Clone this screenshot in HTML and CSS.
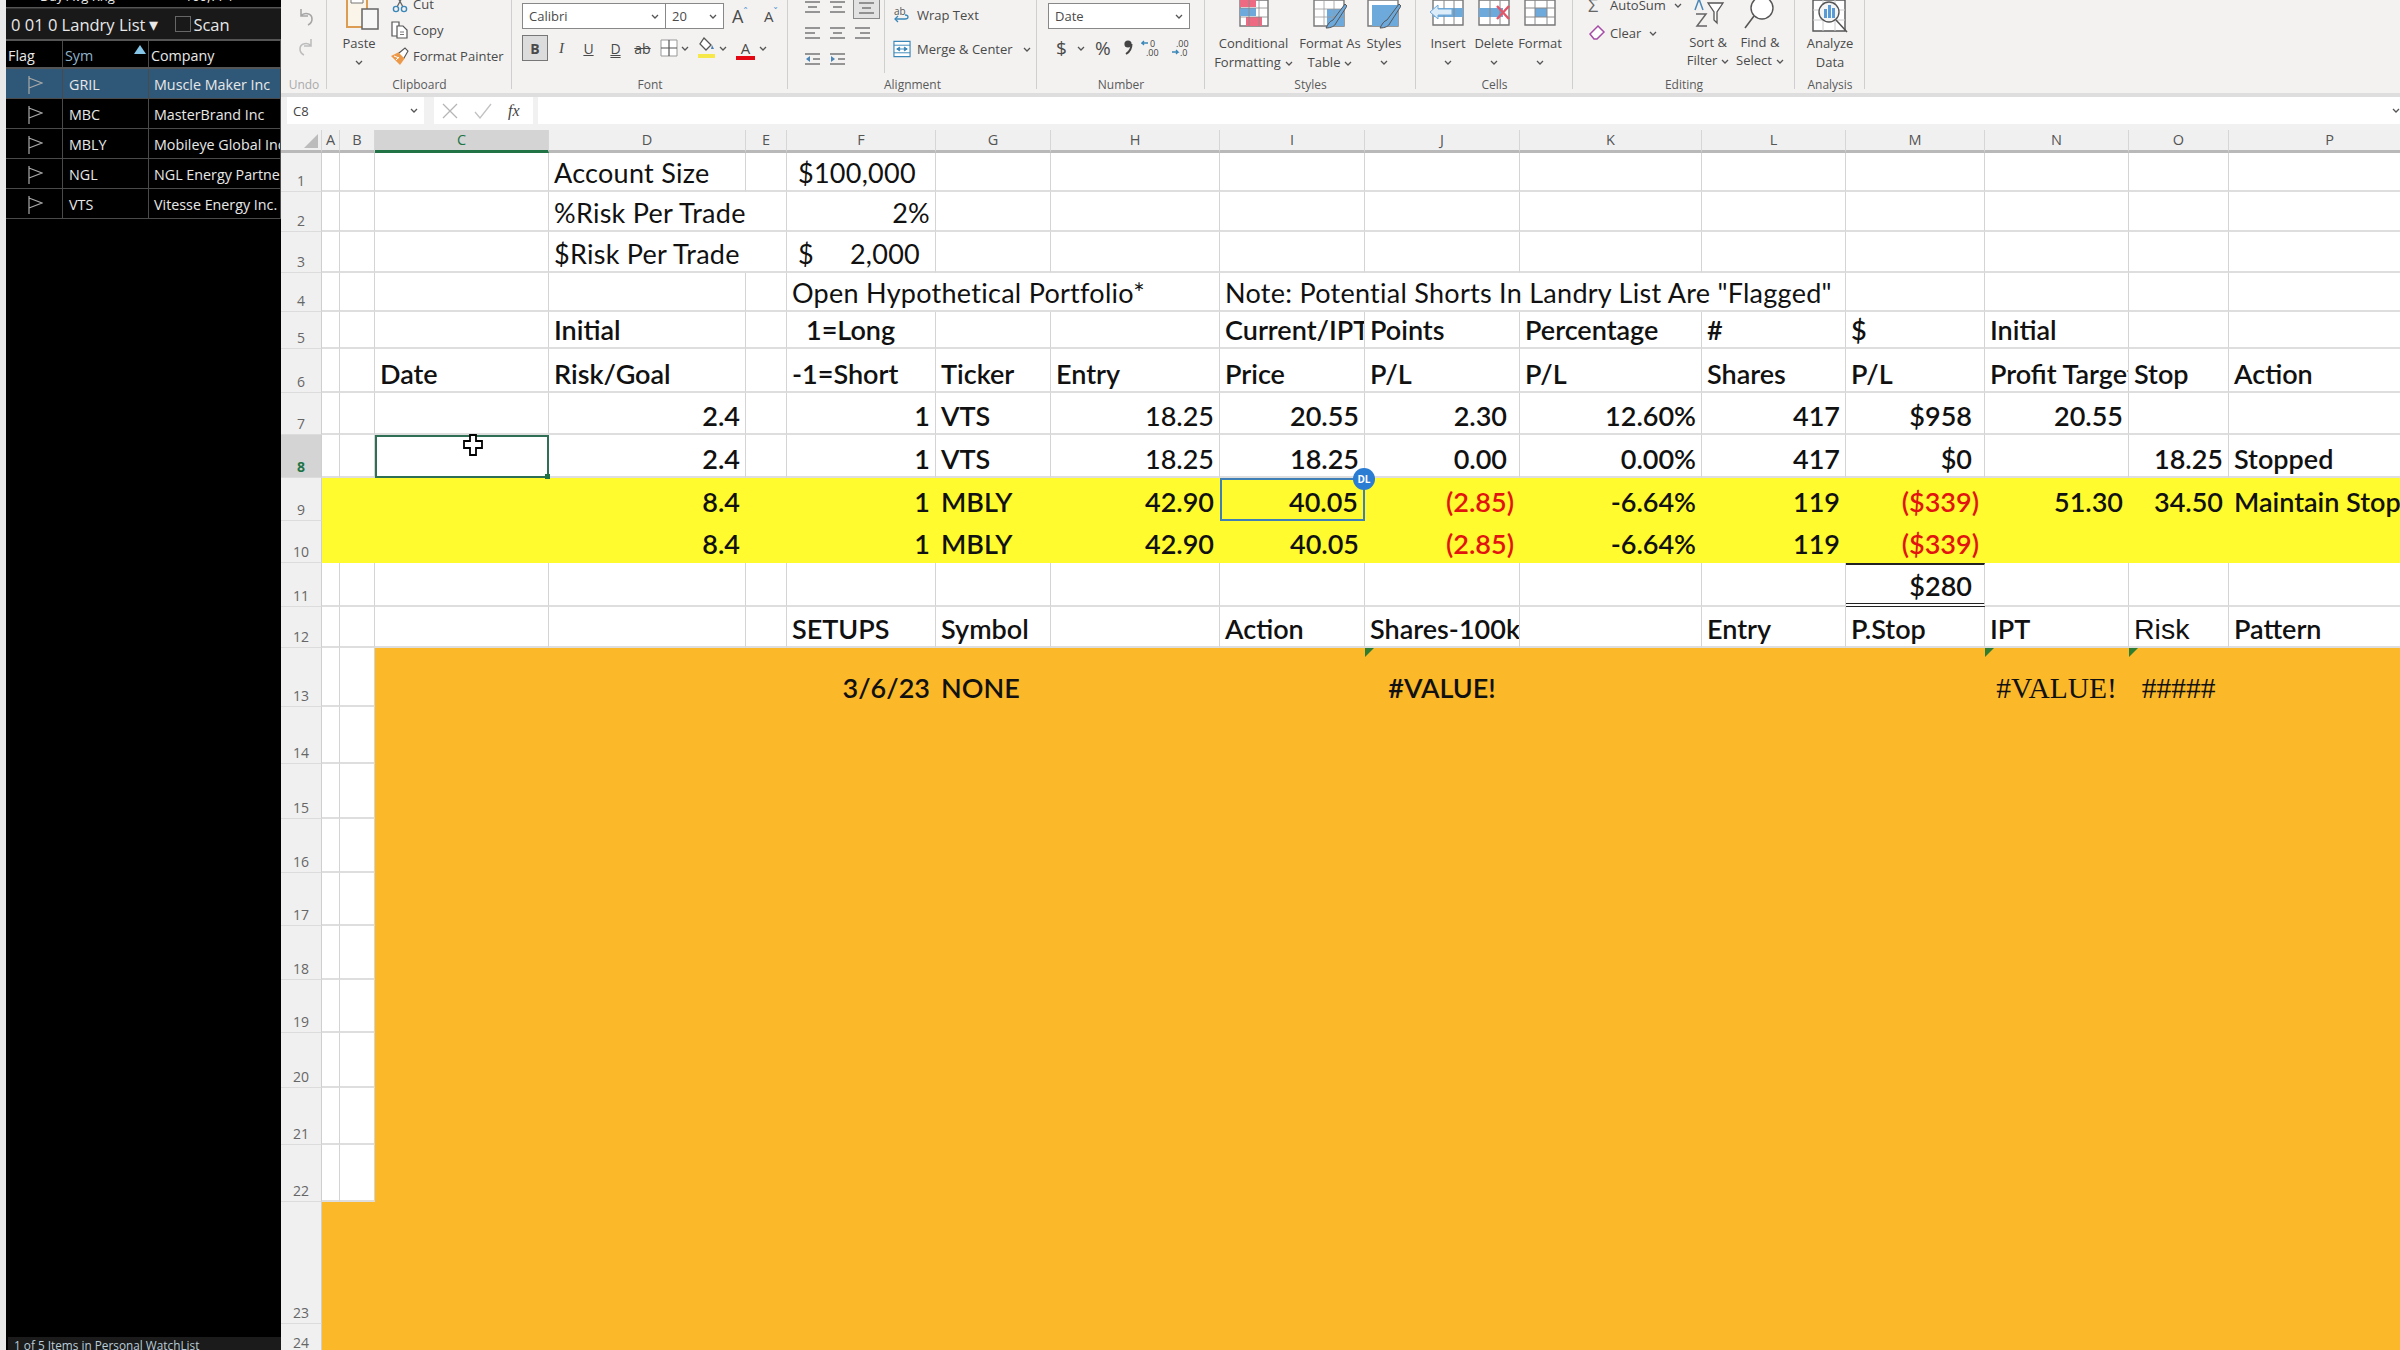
FILE: index.html
```html
<!DOCTYPE html>
<html lang="en">
<head>
	<meta charset="UTF-8">
	<title>Landry List - Excel</title>
	<link rel="stylesheet" href="styles.css">
</head>
<body>
	<svg class="defs" width="0" height="0">
		<symbol id="chev" viewBox="0 0 8 5"><path d="M1 1l3 3 3-3" fill="none" stroke="#555" stroke-width="1.3"/></symbol>
		<symbol id="al-l" viewBox="0 0 15 15"><path d="M0 2h15M0 7h10M0 12h15" stroke="#777" stroke-width="1.6"/></symbol>
		<symbol id="al-c" viewBox="0 0 15 15"><path d="M0 2h15M3 7h9M0 12h15" stroke="#777" stroke-width="1.6"/></symbol>
		<symbol id="al-r" viewBox="0 0 15 15"><path d="M0 2h15M5 7h10M0 12h15" stroke="#777" stroke-width="1.6"/></symbol>
		<symbol id="flag" viewBox="0 0 16 18"><path d="M2 0v18M2 2l13 5-13 5" fill="none" stroke="#a8a8a8" stroke-width="1.2"/></symbol>
	</svg>

	<aside class="watchlist">
		<div class="wl-top"><span>Day Avg Rng</span><span>100,774</span></div>
		<div class="wl-title">
			<span>0 01 0 Landry List</span><span class="wl-caret">&#9662;</span>
			<span class="wl-check"></span><span>Scan</span>
		</div>
		<div class="wl-row wl-head">
			<div>Flag</div>
			<div class="wl-sym">Sym<i class="wl-sort"></i></div>
			<div>Company</div>
		</div>
		<div class="wl-row wl-active">
			<div class="wl-flag"><svg width="16" height="18"><use href="#flag"/></svg></div><div class="wl-ticker">GRIL</div><div>Muscle Maker Inc</div>
		</div>
		<div class="wl-row">
			<div class="wl-flag"><svg width="16" height="18"><use href="#flag"/></svg></div><div class="wl-ticker">MBC</div><div>MasterBrand Inc</div>
		</div>
		<div class="wl-row">
			<div class="wl-flag"><svg width="16" height="18"><use href="#flag"/></svg></div><div class="wl-ticker">MBLY</div><div>Mobileye Global Inc</div>
		</div>
		<div class="wl-row">
			<div class="wl-flag"><svg width="16" height="18"><use href="#flag"/></svg></div><div class="wl-ticker">NGL</div><div>NGL Energy Partners</div>
		</div>
		<div class="wl-row">
			<div class="wl-flag"><svg width="16" height="18"><use href="#flag"/></svg></div><div class="wl-ticker">VTS</div><div>Vitesse Energy Inc.</div>
		</div>
		<div class="wl-status">1 of 5 Items in Personal WatchList</div>
	</aside>

	<main class="app">
		<div class="ribbon">
			<!-- undo -->
			<section class="group group-undo">
				<div class="group-body undo-body">
					<svg width="20" height="20" viewBox="0 0 20 20"><path d="M5 2v7h7M5 9c3-4 11-3 11 3 0 3-2 5-4 6" fill="none" stroke="#a6a6a6" stroke-width="1.6"/></svg>
					<svg width="20" height="20" viewBox="0 0 20 20"><path d="M15 2v7H8M15 9c-3-4-11-3-11 3 0 3 2 5 4 6" fill="none" stroke="#bdbdbd" stroke-width="1.6"/></svg>
				</div>
				<div class="group-label muted">Undo</div>
			</section>

			<!-- clipboard -->
			<section class="group group-clip">
				<div class="group-body">
					<div class="big paste">
						<svg class="big-icon" width="44" height="34" viewBox="0 0 44 34"><path d="M10 -2h20v29H10z" fill="#fbf4e8" stroke="#dc9c52" stroke-width="2"/><path d="M14 -2h12v5H14z" fill="#fff" stroke="#777"/><path d="M25 9h16v20H25z" fill="#f7f7f7" stroke="#666" stroke-width="1.5"/></svg>
						<span>Paste</span>
						<svg class="chev" width="8" height="5"><use href="#chev"/></svg>
					</div>
					<div class="stack">
						<div class="stack-row">
							<svg width="18" height="20" viewBox="0 0 18 20"><path d="M5 0l7 13M13 0L6 13" stroke="#666" stroke-width="1.3"/><circle cx="5" cy="15" r="2.6" fill="none" stroke="#3b87b8" stroke-width="1.4"/><circle cx="13" cy="15" r="2.6" fill="none" stroke="#3b87b8" stroke-width="1.4"/></svg>
							<span>Cut</span>
						</div>
						<div class="stack-row">
							<svg width="18" height="18" viewBox="0 0 18 18"><path d="M1 1h7v14H1z" fill="#fff" stroke="#555" stroke-width="1.2"/><path d="M6 5h6l4 4v8H6z" fill="#fff" stroke="#555" stroke-width="1.2"/><path d="M9 11h4M9 13.500h4" stroke="#777"/></svg>
							<span>Copy</span>
						</div>
						<div class="stack-row">
							<svg width="18" height="18" viewBox="0 0 18 18"><path d="M0 9l8-4 6 6-5 7z" fill="#ec9a4a"/><path d="M3 9l5 2M5 13l3-3" stroke="#fff"/><path d="M8 6l6-5 3 3-4 7" fill="#fff" stroke="#555" stroke-width="1.1"/></svg>
							<span>Format Painter</span>
						</div>
					</div>
				</div>
				<div class="group-label">Clipboard</div>
			</section>

			<!-- font -->
			<section class="group group-font">
				<div class="group-body font-body">
					<div class="tool-row">
						<div class="combo combo-font"><span>Calibri</span><svg width="8" height="5"><use href="#chev"/></svg></div>
						<div class="combo combo-size"><span>20</span><svg width="8" height="5"><use href="#chev"/></svg></div>
						<div class="grow-a">A<sup>&#710;</sup></div>
						<div class="grow-a shrink-a">A<sup>&#711;</sup></div>
					</div>
					<div class="tool-row row-two">
						<div class="tool tool-bold">B</div>
						<div class="tool tool-i">I</div>
						<div class="tool tool-u">U</div>
						<div class="tool tool-d">D</div>
						<div class="tool tool-s">ab</div>
						<div class="tool tool-w">
							<svg width="18" height="18" viewBox="0 0 18 18"><path d="M1 1h16v16H1z" fill="#fff" stroke="#999"/><path d="M9 1v16M1 9h16" stroke="#555" stroke-width="1.2"/></svg>
						</div>
						<div class="tool-c"><svg width="8" height="5"><use href="#chev"/></svg></div>
						<div class="tool tool-w">
							<svg width="20" height="22" viewBox="0 0 20 22"><path d="M7 1l7 7-5 5-6-6z" fill="#fff" stroke="#555" stroke-width="1.3"/><path d="M15 8l2 4h-3z" fill="#4a7fb5"/><path d="M1 17h17v4H1z" fill="#f6e84a"/></svg>
						</div>
						<div class="tool-c"><svg width="8" height="5"><use href="#chev"/></svg></div>
						<div class="tool tool-color">A</div>
						<div class="tool-c"><svg width="8" height="5"><use href="#chev"/></svg></div>
					</div>
				</div>
				<div class="group-label">Font</div>
			</section>

			<!-- alignment -->
			<section class="group group-align">
				<div class="group-body">
					<div class="align-grid">
						<svg width="15" height="15"><use href="#al-c"/></svg>
						<svg width="15" height="15"><use href="#al-c"/></svg>
						<div class="align-on"><svg width="15" height="15"><use href="#al-c"/></svg></div>
						<svg width="15" height="15"><use href="#al-l"/></svg>
						<svg width="15" height="15"><use href="#al-c"/></svg>
						<svg width="15" height="15"><use href="#al-r"/></svg>
						<svg width="15" height="15" viewBox="0 0 15 15"><path d="M0 2h15M8 7h7M0 12h15" stroke="#777" stroke-width="1.6"/><path d="M1 7l4-3v6z" fill="#4a86b8"/></svg>
						<svg width="15" height="15" viewBox="0 0 15 15"><path d="M0 2h15M8 7h7M0 12h15" stroke="#777" stroke-width="1.6"/><path d="M5 7L1 4v6z" fill="#4a86b8"/></svg>
					</div>
					<div class="stack stack-wrap">
						<div class="stack-row">
							<svg width="18" height="18" viewBox="0 0 18 18"><text x="1" y="9" class="wrap-ab">ab</text><path d="M2 13h10c4 0 4-4 0-4" fill="none" stroke="#3b87b8" stroke-width="1.3"/><path d="M5 10l-3 3 3 3" fill="none" stroke="#3b87b8" stroke-width="1.3"/></svg>
							<span>Wrap Text</span>
						</div>
						<div class="stack-row">
							<svg width="19" height="18" viewBox="0 0 19 18"><path d="M1 1h17v16H1z" fill="#fff" stroke="#3b87b8" stroke-width="1.2"/><path d="M1 5h17M1 13h17" stroke="#3b87b8"/><path d="M4 9h11M4 9l3-2v4zM15 9l-3-2v4z" stroke="#3b87b8" fill="#3b87b8"/></svg>
							<span>Merge &amp; Center</span><svg class="chev-inline" width="8" height="5"><use href="#chev"/></svg>
						</div>
					</div>
				</div>
				<div class="group-label">Alignment</div>
			</section>

			<!-- number -->
			<section class="group group-number">
				<div class="group-body font-body">
					<div class="combo combo-num"><span>Date</span><svg width="8" height="5"><use href="#chev"/></svg></div>
					<div class="tool-row row-two num-tools">
						<span class="num-sign">$</span>
						<svg width="8" height="5"><use href="#chev"/></svg>
						<span class="num-sign">%</span>
						<svg class="num-comma" width="12" height="18" viewBox="0 0 12 18"><circle cx="6" cy="5" r="3.6" fill="#444"/><path d="M9.500 5c0 5-2 8-5.500 10" fill="none" stroke="#444" stroke-width="2"/></svg>
						<svg class="num-inc" width="18" height="20" viewBox="0 0 18 20"><text x="9" y="9" class="dec">0</text><text x="5" y="18" class="dec">.00</text><path d="M7 5H1l2-2M1 5l2 2" fill="none" stroke="#3b87b8" stroke-width="1.3"/></svg>
						<svg class="num-dec" width="18" height="20" viewBox="0 0 18 20"><text x="5" y="9" class="dec">.00</text><text x="9" y="18" class="dec">.0</text><path d="M1 14h6l-2-2M7 14l-2 2" fill="none" stroke="#3b87b8" stroke-width="1.3"/></svg>
					</div>
				</div>
				<div class="group-label">Number</div>
			</section>

			<!-- styles -->
			<section class="group group-styles">
				<div class="group-body">
					<div class="big big-cond">
						<svg class="big-icon" width="32" height="34" viewBox="0 0 32 34"><path d="M2 0h28v26H2z" fill="#fff" stroke="#777" stroke-width="1.4"/><path d="M2 -2h16v9H2zM8 17h16v9H8z" fill="#ee6a82"/><path d="M2 8h16v8H2z" fill="#6ea9dc"/><path d="M11 0v26M21 0v26M2 8h28M2 17h28" stroke="#888" stroke-width=".8" fill="none"/></svg>
						<span>Conditional</span>
						<span>Formatting<svg class="chev-inline" width="8" height="5"><use href="#chev"/></svg></span>
					</div>
					<div class="big big-table">
						<svg class="big-icon" width="34" height="34" viewBox="0 0 34 34"><path d="M1 0h30v26H1z" fill="#fff" stroke="#777" stroke-width="1.4"/><path d="M14 9h17v17H14z" fill="#6ea9dc"/><path d="M11 0v26M21 0v26M1 9h30M1 17h30" stroke="#999" stroke-width=".8"/><path d="M32 4L20 20c-3 1-5 4-7 8 5 0 9-2 10-5L34 6z" fill="#6ea9dc" stroke="#555"/></svg>
						<span>Format As</span>
						<span>Table<svg class="chev-inline" width="8" height="5"><use href="#chev"/></svg></span>
					</div>
					<div class="big big-style">
						<svg class="big-icon" width="34" height="34" viewBox="0 0 34 34"><path d="M1 0h30v26H1z" fill="#fff" stroke="#777" stroke-width="1.4"/><path d="M5 5h26v21H5z" fill="#6ea9dc"/><path d="M32 4L20 20c-3 1-5 4-7 8 5 0 9-2 10-5L34 6z" fill="#6ea9dc" stroke="#555"/></svg>
						<span>Styles</span>
						<svg class="chev" width="8" height="5"><use href="#chev"/></svg>
					</div>
				</div>
				<div class="group-label">Styles</div>
			</section>

			<!-- cells -->
			<section class="group group-cells">
				<div class="group-body">
					<div class="big big-cell">
						<svg class="big-icon" width="36" height="34" viewBox="0 0 36 34"><path d="M3 0h30v25H3z" fill="#fff" stroke="#777" stroke-width="1.4"/><path d="M3 8h30v9H3z" fill="#6ea9dc"/><path d="M14 0v25M24 0v25" stroke="#888"/><path d="M0 12l8-7v4h14v6H8v4z" fill="#dcecf8" stroke="#6ea9dc"/></svg>
						<span>Insert</span>
						<svg class="chev" width="8" height="5"><use href="#chev"/></svg>
					</div>
					<div class="big big-cell">
						<svg class="big-icon" width="36" height="34" viewBox="0 0 36 34"><path d="M3 0h30v25H3z" fill="#fff" stroke="#777" stroke-width="1.4"/><path d="M3 8h24v9H3z" fill="#6ea9dc"/><path d="M14 0v25M24 0v25" stroke="#888"/><path d="M21 6l12 13M33 6L21 19" stroke="#e2566a" stroke-width="2.4"/></svg>
						<span>Delete</span>
						<svg class="chev" width="8" height="5"><use href="#chev"/></svg>
					</div>
					<div class="big big-cell">
						<svg class="big-icon" width="36" height="34" viewBox="0 0 36 34"><path d="M3 0h30v25H3z" fill="#fff" stroke="#777" stroke-width="1.4"/><path d="M13 8h12v9H13z" fill="#6ea9dc"/><path d="M13 0v25M25 0v25M3 8h30M3 17h30" stroke="#888"/></svg>
						<span>Format</span>
						<svg class="chev" width="8" height="5"><use href="#chev"/></svg>
					</div>
				</div>
				<div class="group-label">Cells</div>
			</section>

			<!-- editing -->
			<section class="group group-edit">
				<div class="group-body">
					<div class="stack stack-edit">
						<div class="stack-row">
							<span class="sigma">&Sigma;</span>
							<span>AutoSum</span><svg class="chev-inline" width="8" height="5"><use href="#chev"/></svg>
						</div>
						<div class="stack-row">
							<svg width="16" height="18" viewBox="0 0 16 18"><path d="M1 10l8-8 6 6-7 7H5z" fill="#fff" stroke="#a64ca6" stroke-width="1.5"/></svg>
							<span>Clear</span><svg class="chev-inline" width="8" height="5"><use href="#chev"/></svg>
						</div>
					</div>
					<div class="big big-edit">
						<svg class="big-icon" width="36" height="33" viewBox="0 0 36 33"><path d="M6 14h10l-9 12h10" fill="none" stroke="#666" stroke-width="1.5"/><path d="M5 10l4-11 4 11" fill="none" stroke="#4a86b8" stroke-width="1.5"/><path d="M18 3h15l-6 9v11l-3-3v-8z" fill="#fff" stroke="#555" stroke-width="1.3"/></svg>
						<span>Sort &amp;</span>
						<span>Filter<svg class="chev-inline" width="8" height="5"><use href="#chev"/></svg></span>
					</div>
					<div class="big big-edit">
						<svg class="big-icon" width="36" height="33" viewBox="0 0 36 33"><circle cx="20" cy="8" r="11" fill="#fff" stroke="#555" stroke-width="1.4"/><path d="M12 16L3 28" stroke="#555" stroke-width="1.6"/></svg>
						<span>Find &amp;</span>
						<span>Select<svg class="chev-inline" width="8" height="5"><use href="#chev"/></svg></span>
					</div>
				</div>
				<div class="group-label">Editing</div>
			</section>

			<!-- analysis -->
			<section class="group group-analysis">
				<div class="group-body">
					<div class="big big-analysis">
						<svg class="big-icon" width="38" height="34" viewBox="0 0 38 34"><path d="M2 0h32v31H2z" fill="#fff" stroke="#555" stroke-width="1.4"/><path d="M2 10h32M2 20h32M12 0v31M24 0v31" stroke="#ccc"/><circle cx="18" cy="12" r="10" fill="#f5f5f5" stroke="#555" stroke-width="1.4"/><path d="M13 9h3v9h-3zM17 5h3v13h-3zM21 8h3v10h-3z" fill="#5b9bd5"/><path d="M25 20l11 12" stroke="#555" stroke-width="1.6"/></svg>
						<span>Analyze</span>
						<span>Data</span>
					</div>
				</div>
				<div class="group-label">Analysis</div>
			</section>
		</div>

		<div class="formula-bar">
			<div class="name-box"><span>C8</span><svg width="8" height="5"><use href="#chev"/></svg></div>
			<div class="fx-box">
				<svg width="16" height="16" viewBox="0 0 16 16"><path d="M1 1l14 14M15 1L1 15" stroke="#b5b5b5" stroke-width="1.3"/></svg>
				<svg width="18" height="16" viewBox="0 0 18 16"><path d="M1 9l5 6L17 1" fill="none" stroke="#c2c2c2" stroke-width="1.3"/></svg>
				<span class="fx">fx</span>
			</div>
			<div class="formula-input"><svg width="8" height="5"><use href="#chev"/></svg></div>
		</div>

		<table class="sheet">
			<colgroup>
				<col class="c-head"><col class="c-a"><col class="c-b"><col class="c-c"><col class="c-d"><col class="c-e"><col class="c-f"><col class="c-g"><col class="c-h"><col class="c-i"><col class="c-j"><col class="c-k"><col class="c-l"><col class="c-m"><col class="c-n"><col class="c-o"><col class="c-p">
			</colgroup>
			<thead>
				<tr class="col-heads">
					<th class="corner"><i></i></th><th>A</th><th>B</th><th class="on">C</th><th>D</th><th>E</th><th>F</th><th>G</th><th>H</th><th>I</th><th>J</th><th>K</th><th>L</th><th>M</th><th>N</th><th>O</th><th>P</th>
				</tr>
			</thead>
			<tbody>
				<tr class="r1">
					<th>1</th><td></td><td></td><td></td><td>Account Size</td><td></td><td class="in1">$100,000</td><td></td><td></td><td></td><td></td><td></td><td></td><td></td><td></td><td></td><td></td>
				</tr>
				<tr class="r2">
					<th>2</th><td></td><td></td><td></td><td colspan="2">%Risk Per Trade</td><td class="num">2%</td><td></td><td></td><td></td><td></td><td></td><td></td><td></td><td></td><td></td><td></td>
				</tr>
				<tr class="r3">
					<th>3</th><td></td><td></td><td></td><td colspan="2">$Risk Per Trade</td><td><div class="acct"><span>$</span><span>2,000</span></div></td><td></td><td></td><td></td><td></td><td></td><td></td><td></td><td></td><td></td><td></td>
				</tr>
				<tr class="r4">
					<th>4</th><td></td><td></td><td></td><td></td><td></td><td colspan="3">Open Hypothetical Portfolio*</td><td colspan="4">Note: Potential Shorts In Landry List Are "Flagged"</td><td></td><td></td><td></td><td></td>
				</tr>
				<tr class="r5 bold">
					<th>5</th><td></td><td></td><td></td><td>Initial</td><td></td><td class="in2">1=Long</td><td></td><td></td><td>Current/IPT</td><td>Points</td><td>Percentage</td><td>#</td><td>$</td><td>Initial</td><td></td><td></td>
				</tr>
				<tr class="r6 bold">
					<th>6</th><td></td><td></td><td>Date</td><td>Risk/Goal</td><td></td><td>-1=Short</td><td>Ticker</td><td>Entry</td><td>Price</td><td>P/L</td><td>P/L</td><td>Shares</td><td>P/L</td><td>Profit Target</td><td>Stop</td><td>Action</td>
				</tr>
				<tr class="r7 data">
					<th>7</th><td></td><td></td><td></td><td class="num">2.4</td><td></td><td class="num">1</td><td>VTS</td><td class="num thin">18.25</td><td class="num">20.55</td><td class="num pad">2.30</td><td class="num">12.60%</td><td class="num">417</td><td class="num pad">$958</td><td class="num">20.55</td><td></td><td></td>
				</tr>
				<tr class="r8 data">
					<th class="on">8</th><td></td><td></td><td class="picked"><svg class="cursor" width="20" height="22" viewBox="0 0 20 22"><path d="M7 1h6v6h6v7h-6v7H7v-7H1V7h6z" fill="#fff" stroke="#000" stroke-width="1.8"/></svg></td><td class="num">2.4</td><td></td><td class="num">1</td><td>VTS</td><td class="num thin">18.25</td><td class="num">18.25</td><td class="num pad">0.00</td><td class="num">0.00%</td><td class="num">417</td><td class="num pad">$0</td><td></td><td class="num">18.25</td><td>Stopped</td>
				</tr>
				<tr class="r9 data hi">
					<th>9</th><td></td><td></td><td></td><td class="num">8.4</td><td></td><td class="num">1</td><td>MBLY</td><td class="num">42.90</td><td class="num active-cell">40.05<span class="badge">DL</span></td><td class="num red">(2.85)</td><td class="num">-6.64%</td><td class="num">119</td><td class="num red">($339)</td><td class="num">51.30</td><td class="num">34.50</td><td>Maintain Stop</td>
				</tr>
				<tr class="r10 data hi">
					<th>10</th><td></td><td></td><td></td><td class="num">8.4</td><td></td><td class="num">1</td><td>MBLY</td><td class="num">42.90</td><td class="num">40.05</td><td class="num red">(2.85)</td><td class="num">-6.64%</td><td class="num">119</td><td class="num red">($339)</td><td></td><td></td><td></td>
				</tr>
				<tr class="r11 data">
					<th>11</th><td></td><td></td><td></td><td></td><td></td><td></td><td></td><td></td><td></td><td></td><td></td><td></td><td class="num pad total">$280</td><td></td><td></td><td></td>
				</tr>
				<tr class="r12 bold">
					<th>12</th><td></td><td></td><td></td><td></td><td></td><td>SETUPS</td><td>Symbol</td><td></td><td>Action</td><td>Shares-100k</td><td></td><td>Entry</td><td>P.Stop</td><td>IPT</td><td class="arial">Risk</td><td>Pattern</td>
				</tr>
				<tr class="r13 bold">
					<th>13</th><td></td><td></td><td class="orange" colspan="3"></td><td class="orange num">3/6/23</td><td class="orange">NONE</td><td class="orange"></td><td class="orange"></td><td class="orange mid flagged">#VALUE!</td><td class="orange"></td><td class="orange"></td><td class="orange"></td><td class="orange mid serif flagged">#VALUE!</td><td class="orange mid serif flagged">#####</td><td class="orange"></td>
				</tr>
				<tr class="r14"><th>14</th><td></td><td></td><td class="orange" colspan="14"></td></tr>
				<tr class="r15"><th>15</th><td></td><td></td><td class="orange" colspan="14"></td></tr>
				<tr class="r16"><th>16</th><td></td><td></td><td class="orange" colspan="14"></td></tr>
				<tr class="r17"><th>17</th><td></td><td></td><td class="orange" colspan="14"></td></tr>
				<tr class="r18"><th>18</th><td></td><td></td><td class="orange" colspan="14"></td></tr>
				<tr class="r19"><th>19</th><td></td><td></td><td class="orange" colspan="14"></td></tr>
				<tr class="r20"><th>20</th><td></td><td></td><td class="orange" colspan="14"></td></tr>
				<tr class="r21"><th>21</th><td></td><td></td><td class="orange" colspan="14"></td></tr>
				<tr class="r22"><th>22</th><td></td><td></td><td class="orange" colspan="14"></td></tr>
				<tr class="r23"><th>23</th><td class="orange" colspan="16"></td></tr>
				<tr class="r24"><th>24</th><td class="orange" colspan="16"></td></tr>
			</tbody>
		</table>
	</main>
</body>
</html>
```

FILE: styles.css
```css
:root {
    --ribbon-bg: #f3f2f1;
    --ribbon-text: #4a4a4a;
    --grid-h: #dedede;
    --grid-v: #d4d4d4;
    --yellow: #fffb2f;
    --orange: #fbb829;
}

* {
    box-sizing: border-box;
}

html, body {
    margin: 0;
    height: 1350px;
    overflow: hidden;
}

body {
    display: flex;
    background: #fff;
    font-family: "Open Sans", "Liberation Sans", sans-serif;
}

.defs {
    position: absolute;
}

svg {
    display: block;
    flex: none;
}

/* watch list on the left */
.watchlist {
    width: 281px;
    flex: none;
    height: 1350px;
    display: flex;
    flex-direction: column;
    margin: 0;
    background: #000;
    border-left: 6px solid #e9e9e9;
    color: #e8e8e8;
    font-size: 14.3px;
}

/* the row above the title is mostly scrolled off, only its last pixels show */
.wl-top {
    height: 8px;
    flex: none;
    display: flex;
    gap: 70px;
    overflow: hidden;
    padding-left: 34px;
    font-size: 13px;
    line-height: 13px;
    border-bottom: 1px solid #555;
    white-space: nowrap;
}

.wl-top span {
    margin-top: -10px;
}

.wl-title {
    height: 33px;
    flex: none;
    padding: 0 0 0 5px;
    display: flex;
    align-items: center;
    background: #191919;
    border-top: 1px solid #333;
    border-bottom: 2px solid #555;
    font-size: 16.5px;
    white-space: nowrap;
}

.wl-caret {
    margin-left: 4px;
    font-size: 18px;
}

.wl-check {
    width: 16px;
    height: 16px;
    margin: 0 2px 0 17px;
    border: 1px solid #666;
}

.wl-row {
    height: 30px;
    flex: none;
    display: grid;
    grid-template-columns: 57px 86px 132px;
    border-bottom: 1px solid #4a4a4a;
    white-space: nowrap;
    line-height: 31px;
}

.wl-row > div {
    overflow: hidden;
    padding-left: 5px;
    border-right: 1px solid #4a4a4a;
}

.wl-head {
    height: 28px;
    line-height: 29px;
    border-bottom: 2px solid #555;
}

.wl-head > div {
    padding-left: 2px;
}

.wl-sym {
    position: relative;
    color: #8fb4cc;
}

.wl-sort {
    position: absolute;
    right: 2px;
    top: 4px;
    border-left: 6px solid transparent;
    border-right: 6px solid transparent;
    border-bottom: 9px solid #86c6e8;
}

.wl-active {
    background: #2f5878;
}

.wl-flag svg {
    margin: 7px 0 0 16px;
}

.wl-row .wl-ticker {
    padding-left: 6px;
}

.wl-status {
    margin: auto 0 0 2px;
    height: 13px;
    flex: none;
    padding-left: 6px;
    background: #1b1b1b;
    color: #b9ccd8;
    font-size: 11.8px;
    line-height: 16px;
    overflow: hidden;
}

/* excel */
.app {
    flex: 1;
    min-width: 0;
    display: flex;
    flex-direction: column;
    overflow: hidden;
    background: #f1f1f1;
}

.ribbon {
    height: 97px;
    flex: none;
    display: flex;
    overflow: hidden;
    background: var(--ribbon-bg);
    border-bottom: 4px solid #dedede;
    color: var(--ribbon-text);
    font-size: 13px;
}

.group {
    height: 93px;
    flex: none;
    display: flex;
    flex-direction: column;
    position: relative;
}

.group::after {
    content: "";
    position: absolute;
    right: 0;
    top: 0;
    bottom: 4px;
    width: 1px;
    background: #cfcfcf;
}

.group-body {
    height: 76px;
    display: flex;
}

.group-label {
    height: 17px;
    line-height: 17px;
    text-align: center;
    font-size: 12px;
    color: #5a5a5a;
}

.group-label.muted {
    color: #aaa;
}

.group-undo { width: 46px; }
.group-clip { width: 185px; }
.group-font { width: 276px; }
.group-align { width: 249px; }
.group-number { width: 168px; }
.group-styles { width: 211px; }
.group-cells { width: 157px; }
.group-edit { width: 222px; }
.group-analysis { width: 70px; }

.undo-body {
    flex-direction: column;
    align-items: center;
    gap: 10px;
    padding: 7px 0 0 3px;
}

.big {
    display: flex;
    flex-direction: column;
    align-items: center;
    line-height: 19px;
    white-space: nowrap;
}

.big > .chev {
    margin-top: 7px;
}

.chev-inline {
    display: inline-block;
    margin-left: 4px;
    vertical-align: 1px;
}

.paste {
    width: 44px;
    margin: 0 10px 0 10px;
}

.stack {
    display: flex;
    flex-direction: column;
    margin-top: -9px;
}

.stack-row {
    height: 26px;
    display: flex;
    align-items: center;
    gap: 4px;
    white-space: nowrap;
}

.stack-row > svg:first-child,
.stack-row > .sigma {
    width: 18px;
}

.font-body {
    flex-direction: column;
    padding: 3px 0 0 10px;
}

.tool-row {
    display: flex;
    align-items: center;
}

.row-two {
    margin-top: 6px;
    height: 26px;
}

.combo {
    height: 26px;
    display: flex;
    align-items: center;
    justify-content: space-between;
    padding: 0 6px;
    background: #fff;
    border: 1px solid #888;
    font-size: 13px;
    flex: none;
}

.combo-font { width: 144px; }
.combo-size { width: 58px; border-left: 0; }
.combo-num { width: 142px; }

.grow-a {
    width: 36px;
    padding-left: 8px;
    font-size: 18px;
    line-height: 26px;
    white-space: nowrap;
}

.grow-a sup {
    font-size: 10px;
    color: #5b9bd5;
    line-height: 0;
}

.shrink-a {
    font-size: 15px;
}

.tool {
    width: 27px;
    height: 26px;
    display: flex;
    align-items: center;
    justify-content: center;
    font-size: 14px;
    flex: none;
}

.tool-c {
    width: 13px;
    flex: none;
}

.tool-w {
    width: 25px;
}

.tool-bold {
    width: 26px;
    background: #dcdcdc;
    border: 1px solid #777;
    font-weight: 700;
}

.tool-i {
    font-family: "Liberation Serif", serif;
    font-style: italic;
    font-size: 15px;
}

.tool-u {
    text-decoration: underline;
}

.tool-d {
    text-decoration: underline double;
}

.tool-s {
    text-decoration: line-through;
}

.tool-color {
    font-size: 15px;
    line-height: 16px;
    background: linear-gradient(#e30613, #e30613) center 21px / 19px 4px no-repeat;
}

.align-grid {
    width: 80px;
    flex: none;
    margin: -6px 0 0 17px;
    height: 79px;
    display: grid;
    grid-template-columns: 25px 25px 30px;
    grid-auto-rows: 26px;
    align-items: center;
    align-content: start;
    border-right: 1px solid #cfcfcf;
}

.align-on {
    width: 27px;
    height: 24px;
    margin-left: -2px;
    padding: 6px 5px 0;
    background: #e2e2e2;
    border: 1px solid #8a8a8a;
    border-top: 0;
}

.stack-wrap {
    margin: 1px 0 0 8px;
    gap: 6px;
}

.stack-wrap .stack-row {
    height: 28px;
    gap: 6px;
}

.wrap-ab {
    font-size: 10px;
    fill: #555;
}

.group-number .font-body {
    padding-left: 11px;
}

.num-tools {
    gap: 10px;
    padding-left: 8px;
}

.num-sign {
    font-size: 19px;
    line-height: 26px;
}

.num-comma {
    margin-left: 1px;
}

.num-inc {
    margin-left: -3px;
}

.num-dec {
    margin-left: 2px;
}

.dec {
    font-size: 9px;
    fill: #444;
}

.group-styles .group-body {
    padding-left: 2px;
}

.big-cond { width: 93px; }
.big-table { width: 60px; }
.big-style { width: 48px; }

.group-cells .group-body {
    padding-left: 9px;
}

.big-cell { width: 46px; }

.stack-edit {
    width: 109px;
    flex: none;
    padding-left: 15px;
}

.stack-edit .stack-row {
    height: 28px;
    gap: 4px;
}

.sigma {
    font-size: 18px;
    color: #666;
}

.big-edit {
    width: 52px;
    line-height: 18px;
}

.big-analysis {
    width: 70px;
}

/* formula bar */
.formula-bar {
    height: 33px;
    flex: none;
    display: flex;
    padding: 0 0 6px 6px;
    font-size: 13px;
    color: #444;
}

.name-box {
    width: 137px;
    display: flex;
    align-items: center;
    justify-content: space-between;
    padding: 0 6px;
    background: #fff;
}

.fx-box {
    width: 99px;
    margin-left: 10px;
    display: flex;
    align-items: center;
    gap: 16px;
    padding-left: 8px;
    background: #fff;
}

.fx {
    font-family: "Liberation Serif", serif;
    font-style: italic;
    font-size: 16px;
}

.formula-input {
    flex: 1;
    margin-left: 5px;
    display: flex;
    align-items: center;
    justify-content: flex-end;
    background: #fff;
}

/* the sheet itself */
.sheet {
    width: 2150px;
    flex: none;
    table-layout: fixed;
    border-collapse: separate;
    border-spacing: 0;
    background: #fff;
    color: #111;
    font-family: Lato, "Liberation Sans", sans-serif;
    font-size: 27px;
    letter-spacing: .27px;
}

.c-head { width: 41px; }
.c-a { width: 18px; }
.c-b { width: 35px; }
.c-c { width: 174px; }
.c-d { width: 197px; }
.c-e { width: 41px; }
.c-f { width: 149px; }
.c-g { width: 115px; }
.c-h { width: 169px; }
.c-i { width: 145px; }
.c-j { width: 155px; }
.c-k { width: 182px; }
.c-l { width: 144px; }
.c-m { width: 139px; }
.c-n { width: 144px; }
.c-o { width: 100px; }
.c-p { width: 202px; }

.col-heads th {
    height: 23px;
    padding: 0;
    background: #f0f0f0;
    border-right: 1px solid #d6d6d6;
    border-bottom: 3px solid #b9b9b9;
    font: 400 14.5px/20px "Open Sans", sans-serif;
    letter-spacing: 0;
    color: #555;
}

.col-heads th.on {
    background: #d4d4d4;
    border-bottom-color: #217346;
    color: #217346;
}

.corner {
    position: relative;
}

.corner i {
    position: absolute;
    right: 3px;
    bottom: 2px;
    border-left: 14px solid transparent;
    border-bottom: 14px solid #bcbcbc;
}

tbody th {
    padding: 0;
    background: #f0f0f0;
    border-right: 1px solid #cfcfcf;
    border-bottom: 1px solid #dcdcdc;
    vertical-align: bottom;
    font: 400 14px/21px "Open Sans", sans-serif;
    letter-spacing: 0;
    color: #666;
}

tbody th.on {
    background: #d4d4d4;
    color: #217346;
    font-weight: 700;
}

td {
    padding: 0 5px;
    border-right: 1px solid var(--grid-v);
    border-bottom: 2px solid var(--grid-h);
    vertical-align: bottom;
    line-height: 34px;
    white-space: nowrap;
    overflow: hidden;
}

.r1 { height: 39px; }
.r2 { height: 40px; }
.r3 { height: 41px; }
.r4 { height: 39px; }
.r5 { height: 37px; }
.r6 { height: 44px; }
.r7 { height: 42px; }
.r8 { height: 43px; }
.r9 { height: 43px; }
.r10 { height: 42px; }
.r11 { height: 44px; }
.r12 { height: 41px; }
.r13 { height: 59px; }
.r14 { height: 57px; }
.r15 { height: 55px; }
.r16 { height: 54px; }
.r17 { height: 53px; }
.r18 { height: 54px; }
.r19 { height: 53px; }
.r20 { height: 55px; }
.r21 { height: 57px; }
.r22 { height: 57px; }
.r23 { height: 122px; }
.r24 { height: 30px; }

.bold td,
.data td {
    font-weight: 600;
    letter-spacing: 0;
}

.data td.thin {
    font-weight: 500;
}

.num {
    text-align: right;
}

.pad {
    padding-right: 12px;
}

.in1 {
    padding-left: 11px;
}

.in2 {
    padding-left: 19px;
}

.acct {
    display: flex;
    justify-content: space-between;
    padding: 0 10px 0 6px;
}

.red {
    color: #e2140f;
}

.hi td {
    background: var(--yellow);
    border-color: var(--yellow);
}

.orange {
    position: relative;
    background: var(--orange);
    border-color: var(--orange);
}

.mid {
    text-align: center;
}

.bold td.serif {
    font-family: "Liberation Serif", serif;
    font-size: 29.5px;
    font-weight: 400;
}

.bold td.arial {
    font-family: "Liberation Sans", sans-serif;
    font-size: 28.5px;
    font-weight: 400;
}

.flagged::before {
    content: "";
    position: absolute;
    left: 0;
    top: 0;
    border-top: 9px solid #2e7d32;
    border-right: 9px solid transparent;
}

.total {
    border-top: 2px solid #222;
    border-bottom: 4px double #222;
}

.picked {
    position: relative;
    border: 2px solid #2f6f55;
    overflow: visible;
}

.picked::after {
    content: "";
    position: absolute;
    right: -3px;
    bottom: -3px;
    width: 5px;
    height: 5px;
    background: #217346;
}

.cursor {
    position: absolute;
    left: 86px;
    top: -3px;
}

.active-cell {
    position: relative;
    border: 2px solid #3f7fb5;
    overflow: visible;
    z-index: 1;
}

.hi td.active-cell {
    border-color: #3f7fb5;
}

.badge {
    position: absolute;
    right: -12px;
    top: -12px;
    width: 22px;
    height: 22px;
    border-radius: 50%;
    background: #2b7cd3;
    color: #fff;
    font: 700 10px/22px "Open Sans", sans-serif;
    text-align: center;
}
```
